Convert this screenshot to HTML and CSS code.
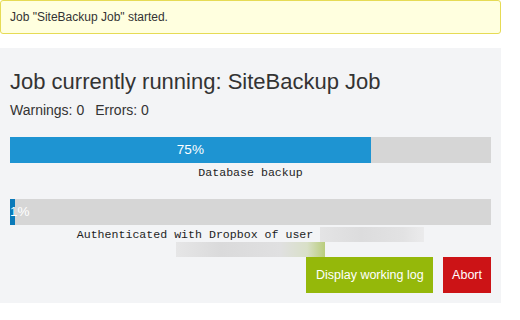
FILE: index.html
```html
<!DOCTYPE html>
<html>
<head>
<meta charset="utf-8">
<link rel="stylesheet" href="styles.css">
</head>
<body>
<div class="notice">Job "SiteBackup Job" started.</div>
<div class="panel">
  <h2 class="title">Job currently running: SiteBackup Job</h2>
  <div class="stats"><span class="stat">Warnings: 0</span><span class="stat">Errors: 0</span></div>
  <div class="bar bar-main"><div class="fill fill-main" style="width:75%"><span class="pct pct-center">75%</span></div></div>
  <div class="label">Database backup</div>
  <div class="bar bar-sub"><div class="fill fill-sub" style="width:1%"><span class="pct">1%</span></div></div>
  <div class="label label-sub">Authenticated with Dropbox of user <span class="blur blur-a"></span><br><span class="blur blur-b"></span></div>
  <div class="actions">
    <span class="btn btn-green">Display working log</span>
    <span class="btn btn-red">Abort</span>
  </div>
</div>
</body>
</html>
```
FILE: styles.css
```css
html, body {
  margin: 0;
  padding: 0;
  background: #ffffff;
}
body {
  font-family: "Liberation Sans", Arial, sans-serif;
  color: #333;
}
.notice {
  box-sizing: border-box;
  width: 501px;
  height: 34px;
  background: #ffffdf;
  border: 1px solid #e6db55;
  border-radius: 3px;
  padding: 0 9px;
  font-size: 12px;
  line-height: 32px;
  color: #333;
}
.panel {
  box-sizing: border-box;
  width: 501px;
  margin-top: 14px;
  background: #f3f4f6;
  padding: 21px 10px 10px 10px;
}
.title {
  margin: 0 0 6px 0;
  font-weight: normal;
  font-size: 22px;
  line-height: 26px;
  color: #333;
}
.stats {
  font-size: 14px;
  line-height: 18px;
}
.stat {
  margin-right: 11px;
}
.bar {
  height: 26px;
  background: #d6d6d6;
  margin-top: 18px;
}
.bar-sub {
  margin-top: 19px;
}
.fill {
  height: 100%;
  position: relative;
}
.fill-main {
  background: #1e94d2;
}
.fill-sub {
  background: #0b7ab9;
}
.pct {
  color: #fff;
  font-size: 13.5px;
  line-height: 26px;
  white-space: nowrap;
}
.pct-center {
  display: block;
  text-align: center;
}
.label {
  margin-top: 2px;
  font-family: "Liberation Mono", "Courier New", monospace;
  font-size: 11.6px;
  line-height: 15px;
  text-align: center;
  color: #1e1e1e;
}
.blur {
  display: inline-block;
  height: 15px;
  vertical-align: top;
}
.blur-a {
  width: 104px;
  background: linear-gradient(90deg, #e4e4e5, #dcdcdd 40%, #e2e2e3 80%, #ebebec);
}
.blur-b {
  width: 149px;
  background: linear-gradient(90deg, #e6e6e7, #dadadb 30%, #e0e0e1 70%, #d9e0c8 88%, #b9cd7c);
}
.actions {
  display: flex;
  justify-content: flex-end;
  gap: 10px;
}
.btn {
  display: inline-block;
  height: 36px;
  line-height: 36px;
  padding: 0 10px;
  color: #fff;
  font-size: 12.5px;
}
.btn-green {
  background: #95b80a;
  padding: 0 9.5px;
}
.btn-red {
  background: #cc1316;
  padding: 0 9px;
}
```
